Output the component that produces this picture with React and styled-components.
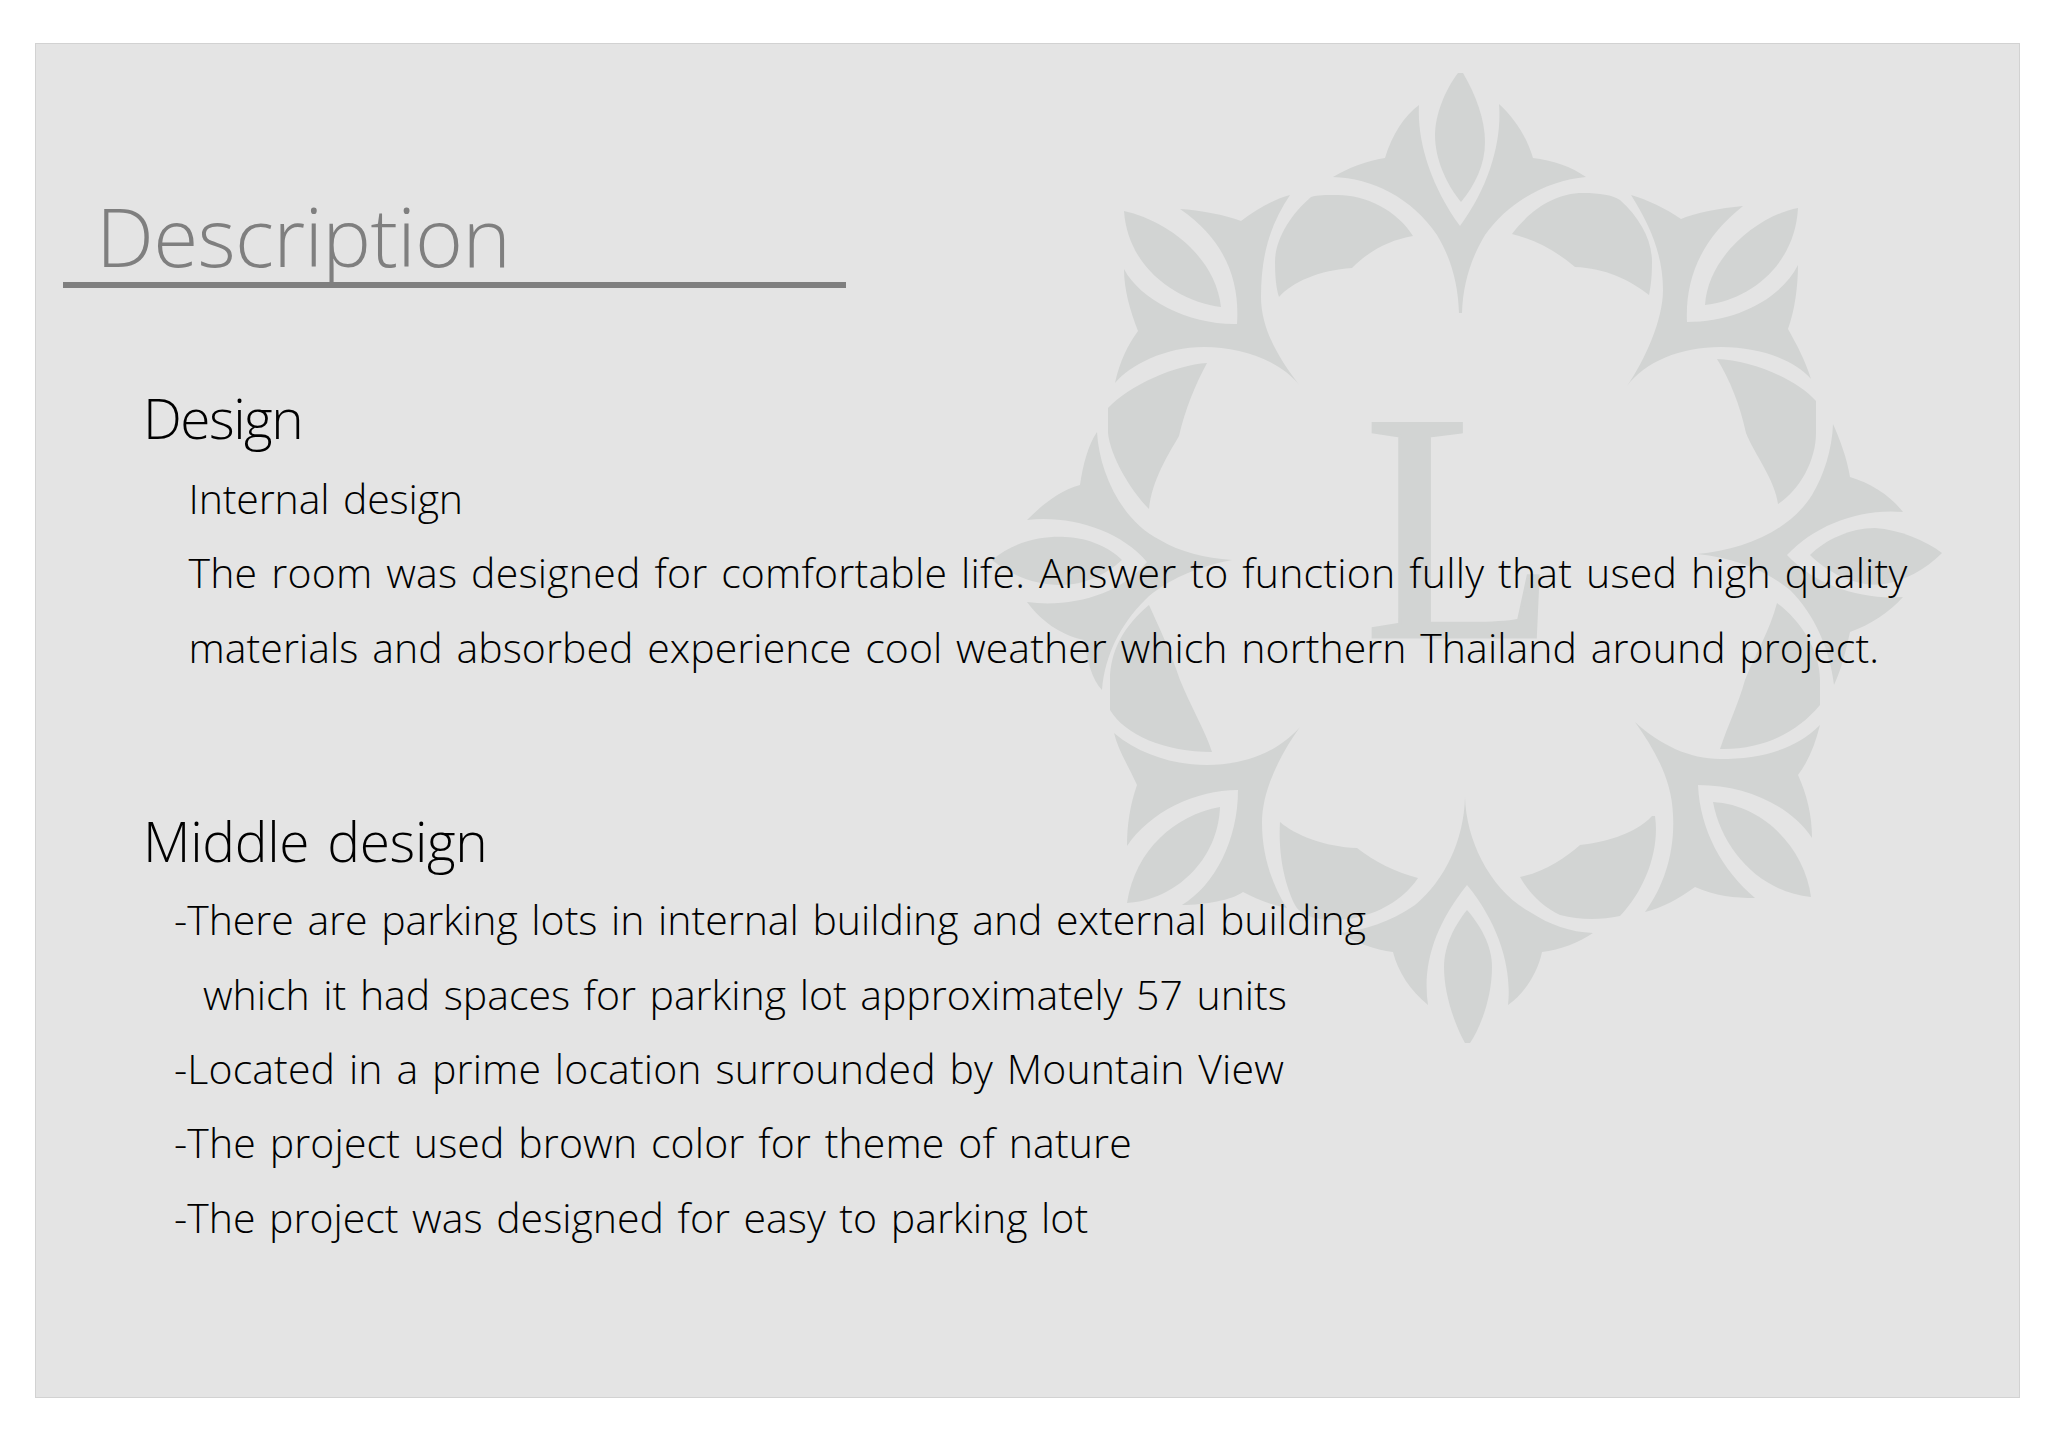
import React from "react";
import styled, { createGlobalStyle } from "styled-components";

const GlobalStyle = createGlobalStyle`
  html, body {
    margin: 0;
    padding: 0;
    background: #ffffff;
  }
`;

const Page = styled.div`
  width: 2048px;
  height: 1448px;
  padding: 43px 0 0 35px;
  box-sizing: border-box;
  overflow: hidden;
  font-family: "Open Sans", "Noto Sans", sans-serif;
  font-weight: 300;
`;

const Panel = styled.main`
  position: relative;
  width: 1985px;
  height: 1355px;
  box-sizing: border-box;
  border: 1px solid #d2d2d2;
  background: #e4e4e4;
`;

const Emblem = styled.svg`
  position: absolute;
  left: 0;
  top: 0;
  width: 1983px;
  height: 1353px;

  path, text {
    fill: #d2d4d3;
  }
  text {
    font-family: "Liberation Serif", serif;
    font-size: 326px;
    stroke: #d2d4d3;
    stroke-width: 3px;
  }
`;

const Content = styled.div`
  position: relative;
  display: flex;
  flex-direction: column;
  padding-top: 144px;
`;

const Title = styled.h1`
  margin: 0 0 0 60px;
  height: 94px;
  font-size: 82px;
  line-height: 94px;
  font-weight: 300;
  letter-spacing: -0.7px;
  color: #7f7f7f;
`;

const Rule = styled.hr`
  width: 783px;
  height: 6px;
  margin: 0 0 0 27px;
  border: 0;
  background: #7f7f7f;
`;

const Section = styled.section`
  display: flex;
  flex-direction: column;
  margin-top: ${(p) => p.$top}px;
`;

const Heading = styled.h2`
  margin: 0 0 ${(p) => p.$after}px 107px;
  height: 70px;
  font-size: 55px;
  line-height: 70px;
  font-weight: 300;
  letter-spacing: ${(p) => p.$ls}px;
  word-spacing: 4px;
  color: #000000;
`;

const Line = styled.p`
  margin: 0 0 0 ${(p) => p.$indent}px;
  height: 74.3px;
  font-size: 41px;
  line-height: 74.3px;
  white-space: nowrap;
  letter-spacing: ${(p) => p.$ls}px;
  word-spacing: 3px;
  color: #000000;
`;

const paths = [
  // top crown
  "M1333 177C1348 168 1366 161 1385 158C1392 135 1404 116 1419 105C1417 140 1430 185 1460 226C1490 185 1502 140 1499 104C1514 118 1526 135 1533 158C1552 160 1572 167 1586 177C1550 180 1510 200 1485 235C1470 260 1463 285 1462 313L1459 313C1458 285 1452 260 1437 235C1412 198 1372 178 1333 177Z",
  "M1458 73L1463 73C1476 95 1485 120 1485 142C1485 165 1475 185 1461 202C1447 185 1435 160 1435 135C1435 115 1445 90 1458 73Z",
  "M1512 234C1530 210 1555 193 1583 193C1600 193 1612 195 1620 200C1640 218 1652 240 1652 262C1652 275 1651 285 1649 295C1630 280 1605 268 1575 267C1555 250 1535 240 1512 234Z",
  "M1413 236C1397 210 1365 195 1338 195C1325 195 1318 195 1311 197C1290 215 1275 240 1275 262C1275 275 1276 288 1279 297C1292 282 1320 270 1352 268C1370 250 1390 240 1413 236Z",
  // upper left flower
  "M1124 211C1165 220 1215 255 1221 307C1180 302 1128 270 1124 211Z",
  "M1180 209C1200 210 1225 215 1241 221C1255 210 1272 200 1290 195C1270 225 1261 255 1261 297C1261 330 1280 360 1300 386C1280 360 1240 347 1204 347C1165 347 1130 365 1115 383C1120 360 1128 345 1138 331C1130 310 1124 290 1124 269C1140 300 1190 325 1237 324C1240 280 1225 240 1180 209Z",
  "M1207 363C1175 365 1130 385 1108 408L1108 433C1110 455 1130 490 1149 509C1152 480 1168 455 1179 436C1185 410 1195 385 1207 363Z",
  // upper right flower
  "M1798 208C1760 215 1708 255 1705 305C1750 300 1795 265 1798 208Z",
  "M1743 206C1720 208 1695 213 1681 219C1665 208 1648 200 1631 195C1650 225 1663 255 1663 290C1663 320 1645 360 1627 386C1645 362 1680 347 1721 347C1760 347 1795 360 1811 379C1805 360 1797 345 1788 329C1795 310 1798 285 1798 265C1780 300 1735 322 1687 322C1685 280 1700 240 1743 206Z",
  "M1717 359C1750 360 1795 378 1816 401L1816 433C1816 460 1800 490 1778 504C1775 480 1755 455 1746 433C1740 405 1730 380 1717 359Z",
  // left cluster
  "M1097 432C1099 470 1120 520 1160 540C1180 552 1205 558 1232 560C1200 566 1165 580 1145 600C1120 625 1105 655 1102 690C1092 680 1087 660 1084 640C1060 635 1040 620 1027 602C1070 608 1120 595 1147 562C1120 530 1070 515 1027 520C1042 505 1060 490 1080 485C1083 465 1088 445 1097 432Z",
  "M992 560C1015 540 1045 536 1065 537C1090 538 1110 548 1122 560C1105 575 1085 585 1060 585C1035 585 1010 575 992 560Z",
  // right cluster
  "M1833 424C1840 440 1847 458 1850 477C1870 483 1890 495 1903 512C1860 508 1815 525 1787 555C1815 585 1860 600 1903 597C1890 612 1870 625 1850 632C1846 650 1842 668 1834 685C1830 650 1815 615 1790 590C1765 570 1735 558 1697 554C1745 550 1790 530 1812 495C1824 475 1832 450 1833 424Z",
  "M1810 555C1825 540 1850 528 1875 528C1900 530 1925 540 1942 553C1925 570 1905 580 1885 584C1860 588 1830 575 1810 555Z",
  // lower left flower
  "M1149 605C1125 625 1110 650 1110 680L1110 710C1125 735 1165 752 1212 752C1205 730 1190 705 1180 680C1170 650 1158 625 1149 605Z",
  "M1114 733C1140 755 1175 765 1207 765C1240 765 1275 755 1300 727C1280 755 1262 790 1262 823C1262 855 1272 885 1287 908C1270 905 1255 898 1243 892C1232 900 1205 905 1182 905C1215 885 1238 840 1238 790C1195 790 1150 812 1127 846C1127 825 1130 805 1137 785C1128 765 1118 750 1114 733Z",
  "M1220 807C1175 815 1135 850 1127 903C1175 900 1218 860 1220 807Z",
  "M1280 822C1295 835 1325 847 1357 848C1375 862 1395 872 1418 878C1400 905 1365 920 1335 920C1315 920 1300 915 1295 905C1285 885 1278 855 1280 822Z",
  // bottom crown
  "M1465 797C1466 840 1490 890 1530 912C1550 925 1570 932 1593 933C1580 942 1560 950 1542 952C1538 972 1525 993 1508 1005C1512 970 1500 925 1467 885C1435 925 1422 965 1428 1005C1410 990 1398 972 1393 952C1375 950 1355 942 1340 933C1365 930 1390 922 1415 905C1445 880 1464 840 1465 797Z",
  "M1467 910C1455 925 1444 945 1444 967C1444 995 1455 1025 1465 1043L1470 1043C1482 1025 1492 995 1492 967C1492 945 1480 925 1467 910Z",
  // lower right flower
  "M1520 877C1545 872 1565 858 1580 845C1600 843 1635 835 1652 816L1655 816C1660 850 1645 890 1620 916C1600 920 1580 920 1560 915C1545 908 1530 895 1520 877Z",
  "M1635 722C1660 745 1690 759 1720 759C1760 759 1795 750 1820 725C1815 745 1808 762 1798 775C1807 795 1812 815 1812 838C1790 805 1745 785 1698 785C1700 830 1722 870 1755 898C1735 898 1715 896 1695 887C1680 898 1662 908 1645 912C1665 885 1675 850 1673 815C1672 780 1655 750 1635 722Z",
  "M1713 802C1765 805 1805 850 1811 897C1760 892 1722 850 1713 802Z",
  "M1777 603C1800 620 1820 650 1820 680L1820 705C1795 735 1760 750 1720 749C1728 725 1738 705 1745 680C1755 655 1770 630 1777 603Z",
];

const designLines = [
  { text: "Internal design", indent: 152.5, ls: -0.13 },
  { text: "The room was designed for comfortable life. Answer to function fully that used high quality", indent: 152.5, ls: 0.21 },
  { text: "materials and absorbed experience cool weather which northern Thailand around project.", indent: 152.5, ls: 0.06 },
];

const middleLines = [
  { text: "-There are parking lots in internal building and external building", indent: 138, ls: -0.02 },
  { text: "which it had spaces for parking lot approximately 57 units", indent: 167, ls: -0.02 },
  { text: "-Located in a prime location surrounded by Mountain View", indent: 138, ls: 0.13 },
  { text: "-The project used brown color for theme of nature", indent: 138, ls: 0.13 },
  { text: "-The project was designed for easy to parking lot", indent: 138, ls: 0 },
];

export default function App() {
  return (
    <>
      <GlobalStyle />
      <Page>
        <Panel>
          <Emblem viewBox="36 44 1983 1353" aria-hidden="true">
            {paths.map((d) => (
              <path key={d} d={d} />
            ))}
            <text transform="translate(1364 637) scale(0.97 1)">L</text>
          </Emblem>
          <Content>
            <Title>Description</Title>
            <Rule />
            <Section $top={95}>
              <Heading $ls={-1.5} $after={8}>Design</Heading>
              {designLines.map((l) => (
                <Line key={l.text} $indent={l.indent} $ls={l.ls}>{l.text}</Line>
              ))}
            </Section>
            <Section $top={122}>
              <Heading $ls={-0.3} $after={6.5}>Middle design</Heading>
              {middleLines.map((l) => (
                <Line key={l.text} $indent={l.indent} $ls={l.ls}>{l.text}</Line>
              ))}
            </Section>
          </Content>
        </Panel>
      </Page>
    </>
  );
}
